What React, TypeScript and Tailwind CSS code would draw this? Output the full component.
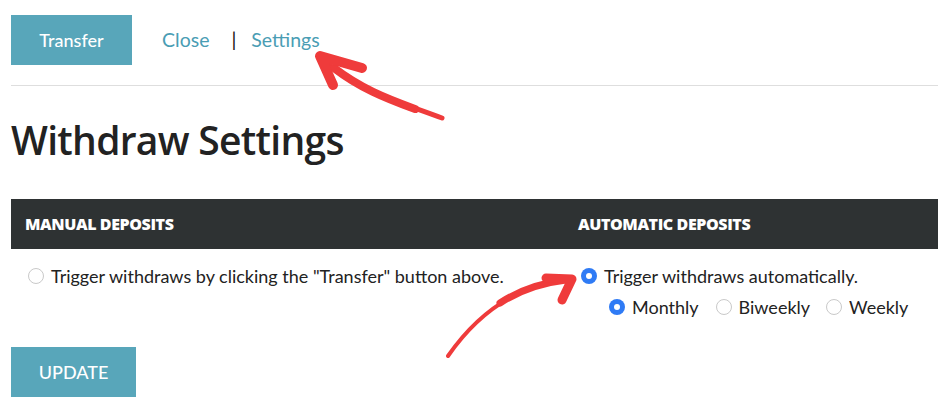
import React from "react";

function Radio({ checked }: { checked?: boolean }) {
  return checked ? (
    <span className="inline-flex h-[16px] w-[16px] shrink-0 items-center justify-center rounded-full bg-[#2f7bf5]">
      <span className="h-[6px] w-[6px] rounded-full bg-white" />
    </span>
  ) : (
    <span className="inline-block h-[16px] w-[16px] shrink-0 rounded-full border border-[#c9c9c9] bg-white" />
  );
}

export default function App() {
  return (
    <div className="relative h-[419px] w-[938px] overflow-hidden bg-white font-['Lato','Liberation_Sans',sans-serif] text-[#222]">
      <div className="pl-[11px]">
        <div className="flex items-center pt-[15px]">
          <button className="flex h-[50px] w-[121px] items-center justify-center bg-[#58a6ba] text-[18px] font-medium text-white">
            Transfer
          </button>
          <span className="ml-[30px] text-[19.5px] text-[#4a9db4]">Close</span>
          <span className="ml-[22px] text-[19.5px] text-[#111]">|</span>
          <span className="ml-[15px] text-[19.5px] text-[#4a9db4]">Settings</span>
        </div>
        <div className="mt-[20px] h-px bg-[#dedede]" />
        <h1 className="mt-[30px] font-['Open_Sans','Liberation_Sans',sans-serif] text-[39px] font-semibold leading-[48px] tracking-[-0.7px] text-[#222]">
          Withdraw Settings
        </h1>
        <div className="mt-[35px] grid h-[50px] grid-cols-[553px_1fr] items-center bg-[#2e3233] text-[16px] font-extrabold text-white font-['Open_Sans','Liberation_Sans',sans-serif] tracking-[-0.4px]">
          <div className="pl-[14px]">MANUAL DEPOSITS</div>
          <div className="pl-[14px]">AUTOMATIC DEPOSITS</div>
        </div>
        <div className="grid grid-cols-[553px_1fr] items-start pt-[17px] text-[18px] leading-[20px]">
          <div className="flex items-center gap-[7px] pl-[17px]">
            <Radio />
            <span>Trigger withdraws by clicking the "Transfer" button above.</span>
          </div>
          <div className="flex flex-col gap-[11px] pl-[17px]">
            <div className="flex items-center gap-[7px]">
              <Radio checked />
              <span>Trigger withdraws automatically.</span>
            </div>
            <div className="flex items-center pl-[28px]">
              <Radio checked />
              <span className="ml-[7px]">Monthly</span>
              <span className="ml-[17px]" />
              <Radio />
              <span className="ml-[7px]">Biweekly</span>
              <span className="ml-[16px]" />
              <Radio />
              <span className="ml-[7px]">Weekly</span>
            </div>
          </div>
        </div>
        <button className="mt-[30px] flex h-[50px] w-[125px] items-center justify-center bg-[#58a6ba] text-[18px] font-medium text-white">
          UPDATE
        </button>
      </div>

      <svg className="pointer-events-none absolute left-0 top-0" width="938" height="419" viewBox="0 0 938 419">
        <g fill="none" stroke="#ef3b3b" strokeLinecap="round" strokeLinejoin="round">
          <path d="M442 118 C 400 102, 360 92, 328 64" strokeWidth="5" />
          <path d="M415 109 C 385 98, 360 88, 334 68" strokeWidth="8" />
          <path d="M362 68 L 320 56 L 333 85" strokeWidth="10" />
          <path d="M448 356 C 480 310, 520 285, 568 279" strokeWidth="4" />
          <path d="M500 303 C 520 290, 540 283, 566 280" strokeWidth="7" />
          <path d="M546 278 L 572 279 L 562 300" strokeWidth="9" />
        </g>
      </svg>
    </div>
  );
}
